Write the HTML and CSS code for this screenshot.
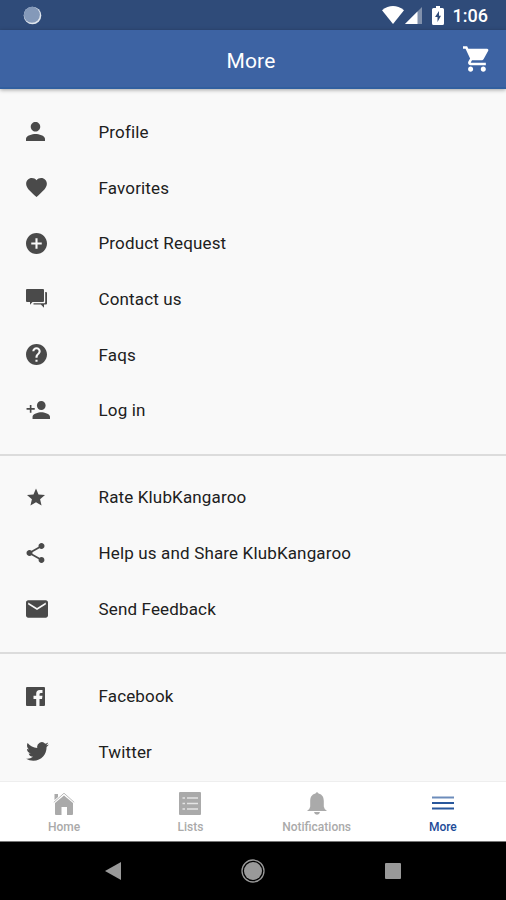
FILE: index.html
```html
<!DOCTYPE html>
<html lang="en">
<head>
<meta charset="utf-8">
<title>More</title>
<link rel="stylesheet" href="styles.css">
</head>
<body>
<div class="screen">
  <div class="status">
    <svg class="spinner" width="19" height="19" viewBox="0 0 19 19"><circle cx="9.5" cy="9.500" r="8.800" fill="#dfe5ed"/><circle cx="8.900" cy="8.800" r="8" fill="#8499b9"/></svg>
    <div class="signals">
      <svg class="wifi" width="22" height="18" viewBox="0 0 22 18"><path d="M0 4.2Q11-4 22 4.2L11 18Z" fill="#fff"/></svg>
      <svg class="cell" width="17" height="17" viewBox="0 0 17 17"><path d="M17 0V17H0Z" fill="#8191ac"/><path d="M12.5 4.5V17H0Z" fill="#fff"/></svg>
      <svg class="battery" width="12" height="19" viewBox="0 0 12 19"><path d="M4 0H8V2H10.5Q12 2 12 3.5V17.5Q12 19 10.5 19H1.5Q0 19 0 17.5V3.500Q0 2 1.500 2H4Z" fill="#fff"/><path d="M7 5L3 11H5.500V16L9 9.700H7Z" fill="#2f4b79"/></svg>
      <span class="time">1:06</span>
    </div>
  </div>
  <header class="bar">
    <h1>More</h1>
    <svg class="cart" width="26" height="26" viewBox="1 2 20.500 20"><path fill="#fff" d="M7 18c-1.100 0-1.990.9-1.990 2S5.900 22 7 22s2-.9 2-2-.9-2-2-2zM1 2v2h2l3.600 7.590-1.350 2.450c-.16.28-.25.61-.25.96 0 1.100.9 2 2 2h12v-2H7.420c-.14 0-.25-.11-.25-.25l.03-.12.9-1.630h7.450c.75 0 1.410-.41 1.750-1.030l3.580-6.490A1 1 0 0 0 20 4H5.210l-.94-2H1zm16 16c-1.100 0-1.990.9-1.990 2s.89 2 1.990 2 2-.9 2-2-.9-2-2-2z"/></svg>
  </header>
  <main class="menu">
    <ul class="group">
      <li><span class="icon"><svg width="19" height="19" viewBox="4 4 16 16"><path d="M12 12c2.210 0 4-1.790 4-4s-1.790-4-4-4-4 1.790-4 4 1.790 4 4 4zm0 2c-2.670 0-8 1.340-8 4v2h16v-2c0-2.660-5.330-4-8-4z"/></svg></span>Profile</li>
      <li><span class="icon"><svg width="21" height="19" viewBox="2 3 20 18.350"><path d="M12 21.350l-1.450-1.320C5.400 15.360 2 12.280 2 8.500 2 5.420 4.420 3 7.500 3c1.740 0 3.410.81 4.500 2.090C13.090 3.810 14.760 3 16.500 3 19.580 3 22 5.420 22 8.500c0 3.780-3.400 6.860-8.550 11.540L12 21.350z"/></svg></span>Favorites</li>
      <li><span class="icon"><svg width="21" height="21" viewBox="2 2 20 20"><path d="M12 2C6.480 2 2 6.480 2 12s4.480 10 10 10 10-4.480 10-10S17.520 2 12 2zm5 11h-4v4h-2v-4H7v-2h4V7h2v4h4v2z"/></svg></span>Product Request</li>
      <li><span class="icon"><svg width="21" height="19" viewBox="0 0 21 19"><path d="M1 0H17Q18 0 18 1V12Q18 13 17 13H6.500L4 15.800V13H1Q0 13 0 12V1Q0 0 1 0Z"/><path d="M19.200 3H20Q21 3 21 4V14.500Q21 15.500 20 15.500H18V18.800L14.800 15.500H7.500V14.300H18.200Q19.200 14.300 19.200 13.300Z"/></svg></span>Contact us</li>
      <li><span class="icon"><svg width="21" height="21" viewBox="2 2 20 20"><path d="M12 2C6.480 2 2 6.480 2 12s4.480 10 10 10 10-4.480 10-10S17.520 2 12 2zm1 17h-2v-2h2v2zm2.070-7.750l-.9.920C13.450 12.900 13 13.500 13 15h-2v-.5c0-1.100.45-2.100 1.170-2.830l1.240-1.260c.37-.36.59-.86.59-1.410 0-1.100-.9-2-2-2s-2 .9-2 2H8c0-2.210 1.790-4 4-4s4 1.790 4 4c0 .88-.36 1.680-.93 2.250z"/></svg></span>Faqs</li>
      <li><span class="icon"><svg width="24" height="18" viewBox="1 4 22 16" preserveAspectRatio="none"><path d="M15 12c2.210 0 4-1.790 4-4s-1.790-4-4-4-4 1.790-4 4 1.790 4 4 4zm-9-2V7.500H4.500V10.300H1.500v1.400h3v2.800h1.500v-2.800h3v-1.400H6zm9 4c-2.670 0-8 1.340-8 4v2h16v-2c0-2.660-5.330-4-8-4z"/></svg></span>Log in</li>
    </ul>
    <ul class="group">
      <li><span class="icon star"><svg width="18" height="18" viewBox="2 2 20 19"><path d="M12 17.270L18.180 21l-1.640-7.030L22 9.240l-7.190-.61L12 2 9.190 8.630 2 9.240l5.460 4.730L5.820 21z"/></svg></span>Rate KlubKangaroo</li>
      <li><span class="icon"><svg width="19" height="20" viewBox="3 2 18 20"><path d="M18 16.080c-.76 0-1.440.3-1.960.77L8.910 12.700c.05-.23.09-.46.09-.7s-.04-.47-.09-.7l7.050-4.110c.54.5 1.250.81 2.040.81 1.660 0 3-1.340 3-3s-1.340-3-3-3-3 1.340-3 3c0 .24.040.47.090.7L8.040 9.810C7.500 9.310 6.790 9 6 9c-1.660 0-3 1.340-3 3s1.340 3 3 3c.79 0 1.500-.31 2.040-.81l7.120 4.160c-.05.21-.08.43-.08.65 0 1.610 1.310 2.920 2.920 2.920s2.920-1.310 2.920-2.920-1.310-2.920-2.920-2.920z"/></svg></span>Help us and Share KlubKangaroo</li>
      <li><span class="icon"><svg width="22" height="18" viewBox="2 4 20 16"><path d="M20 4H4c-1.100 0-1.990.9-1.990 2L2 18c0 1.100.9 2 2 2h16c1.100 0 2-.9 2-2V6c0-1.100-.9-2-2-2zm0 4l-8 5-8-5V6l8 5 8-5v2z"/></svg></span>Send Feedback</li>
    </ul>
    <ul class="group">
      <li><span class="icon"><svg width="19" height="19" viewBox="0 0 19 19"><path d="M1 0H18Q19 0 19 1V18Q19 19 18 19H13.500V12H16L16.500 8.800H13.500V7.200Q13.500 6 15 6H16.500V3H13.800Q10.200 3 10.200 6.700V8.800H7.500V12H10.200V19H1Q0 19 0 18V1Q0 0 1 0Z"/></svg></span>Facebook</li>
      <li><span class="icon"><svg width="23" height="19" viewBox="0 2 24 20"><path d="M23.950 4.570a10 10 0 0 1-2.820.77 4.960 4.960 0 0 0 2.160-2.720c-.95.55-2 .95-3.130 1.180a4.920 4.920 0 0 0-8.380 4.480C7.690 8.100 4.070 6.130 1.640 3.160a4.820 4.820 0 0 0-.67 2.480c0 1.710.87 3.210 2.190 4.100a4.900 4.900 0 0 1-2.230-.62v.06a4.920 4.920 0 0 0 3.950 4.830 5 5 0 0 1-2.210.08 4.940 4.940 0 0 0 4.600 3.420A9.870 9.870 0 0 1 0 19.540a14 14 0 0 0 7.550 2.210c9.050 0 14-7.500 14-13.980 0-.21 0-.42-.02-.63a9.940 9.940 0 0 0 2.460-2.550z"/></svg></span>Twitter</li>
    </ul>
  </main>
  <nav class="tabs">
    <a><svg width="22" height="23" viewBox="0 0 22 23"><path d="M11 3.500L20 11V22Q20 23 19 23H14V15H8.500V23H3Q2 23 2 22V11Z"/><path d="M.8 10.300L11 1.200L21.200 10.300" fill="none" stroke="#bbb" stroke-width="1"/><path d="M1.500 2H5V5L1.500 8Z"/></svg><span>Home</span></a>
    <a><svg width="22" height="23" viewBox="0 0 22 23"><rect width="22" height="23" rx="1"/><path d="M3.500 6H6M8 6H19M3.500 11.500H6M8 11.500H19M3.500 17H6M8 17H19" stroke="#e4e4e4" stroke-width="1.500"/></svg><span>Lists</span></a>
    <a><svg width="20" height="23" viewBox="0 0 20 23"><path d="M8.500 1.500Q10-.8 11.500 1.500C15.500 2.500 16.800 5.500 16.800 9V14.500Q17 17 20 19H0Q3 17 3.200 14.500V9C3.200 5.500 4.500 2.500 8.500 1.500ZM7 20H13Q12.500 22.700 10 22.700T7 20Z"/></svg><span>Notifications</span></a>
    <a class="active"><svg width="22" height="23" viewBox="0 0 22 23"><path d="M0 5.500H22" stroke="#6c8cbb" stroke-width="2"/><path d="M0 11H22M0 16.500H22" stroke="#28579c" stroke-width="2"/></svg><span>More</span></a>
  </nav>
  <footer class="system">
    <svg width="16" height="18" viewBox="0 0 16 18"><path d="M16 0V18L0 9Z"/></svg>
    <svg width="24" height="24" viewBox="0 0 24 24"><circle cx="12" cy="12" r="9"/><circle cx="12" cy="12" r="11" fill="none" stroke="#999" stroke-width="1.300"/></svg>
    <svg width="16" height="16" viewBox="0 0 16 16"><rect width="16" height="16" rx="1"/></svg>
  </footer>
</div>
</body>
</html>
```
FILE: styles.css
```css
* { box-sizing: border-box; }
body { margin: 0; font-family: Roboto, "Liberation Sans", sans-serif; background: #f9f9f9; }
svg { display: block; flex: none; }
.screen { width: 506px; height: 900px; display: flex; flex-direction: column; overflow: hidden; }
.status { flex: none; height: 30px; background: #2f4b79; display: flex; justify-content: space-between; align-items: center; padding: 0 18px 0 23px; }
.signals { display: flex; align-items: center; color: #fff; }
.cell { margin: 1px 0 0 -1px; }
.wifi { margin-right: 2px; }
.battery { margin: 0 9px 0 10px; }
.time { font-size: 18px; font-weight: 500; line-height: 30px; padding-top: 2px; }
.bar { flex: none; height: 59px; background: #3d63a3; border-bottom: 2px solid #315f9f; box-shadow: 0 1px 4px rgba(0, 0, 0, .35); display: grid; grid-template-columns: 1fr auto 1fr; align-items: center; padding: 4px 17px 0 13px; z-index: 1; }
.bar h1 { grid-column: 2; margin: 0; font-size: 21px; font-weight: 400; color: #fff; letter-spacing: .2px; }
.cart { justify-self: end; margin-top: -3px; }
.menu { flex: 1; min-height: 0; overflow: hidden; color: #202020; }
.group { list-style: none; margin: 0; padding: 15px 0 15.500px; }
.group + .group { border-top: 2px solid #dcdcdc; padding-top: 14px; }
.group li { height: 55.700px; display: flex; align-items: center; font-size: 17px; letter-spacing: .15px; padding-left: 25.500px; }
.icon { width: 73px; fill: #4a4a4a; }
.star { padding-left: 1px; }
.tabs { flex: none; height: 61px; background: #fff; border-top: 1px solid #eee; border-bottom: 1px solid #777; display: grid; grid-template-columns: repeat(4, 1fr); padding-left: 1px; fill: #aaa; color: #aaa; }
.tabs a { display: flex; flex-direction: column; align-items: center; padding-top: 10px; font-size: 12px; font-weight: 500; line-height: 14px; gap: 5px; }
.tabs .active { color: #1d4b98; }
.system { flex: none; height: 58px; background: #000; display: flex; justify-content: space-between; align-items: center; padding: 0 105px; fill: #999; }
```
